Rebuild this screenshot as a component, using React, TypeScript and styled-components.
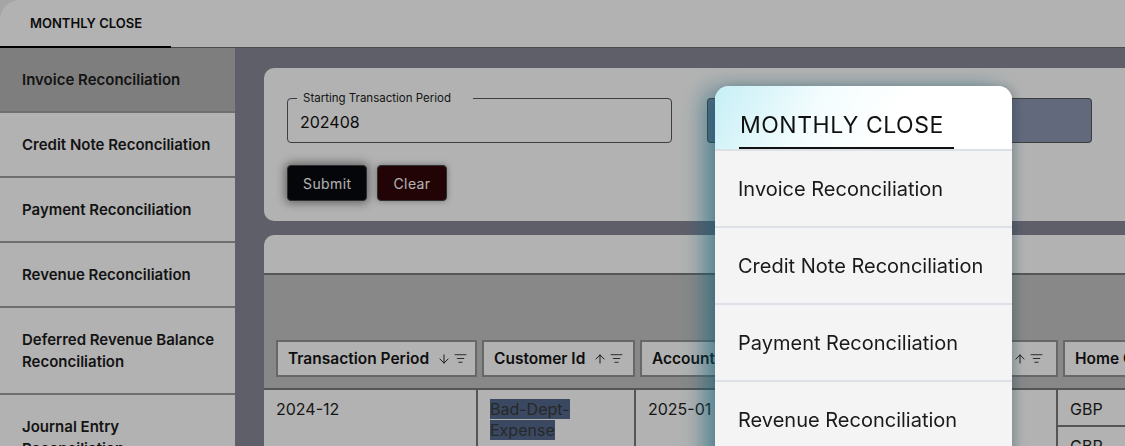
import React from 'react'
import styled, { createGlobalStyle } from 'styled-components'
import { ArrowDown, ArrowUp, ListFilter } from 'lucide-react'

const GlobalStyle = createGlobalStyle`
  html, body {
    margin: 0;
    height: 100%;
    overflow: hidden;
    background: #ececec;
  }
  body {
    font-family: Inter, "Noto Sans", Arial, sans-serif;
    color: #222;
  }
`

const sideItems = [
  'Invoice Reconciliation',
  'Credit Note Reconciliation',
  'Payment Reconciliation',
  'Revenue Reconciliation',
  'Deferred Revenue Balance Reconciliation',
  'Journal Entry Reconciliation',
]

const menuItems = [
  'Invoice Reconciliation',
  'Credit Note Reconciliation',
  'Payment Reconciliation',
  'Revenue Reconciliation',
]

type HeadCol = { label: string; sort?: 'asc' | 'desc'; width: string }

const headCols: HeadCol[] = [
  { label: 'Transaction Period', sort: 'desc', width: '201px' },
  { label: 'Customer Id', sort: 'asc', width: '153px' },
  { label: 'Account Code', sort: 'asc', width: '418px' },
  { label: 'Home Currency', width: '160px' },
]

export default function App() {
  return (
    <>
      <GlobalStyle />
      <Page>
        <TopBar>
          <Tab $active>MONTHLY CLOSE</Tab>
        </TopBar>
        <Body>
          <Sidebar>
            {sideItems.map((item, i) => (
              <SideItem key={item} $active={i === 0}>
                {item}
              </SideItem>
            ))}
          </Sidebar>
          <Main>
            <FilterCard>
              <Fields>
                <Fieldset>
                  <Legend>Starting Transaction Period</Legend>
                  <Value>202408</Value>
                </Fieldset>
                <Fieldset $filled />
              </Fields>
              <Buttons>
                <Button $tone="dark">Submit</Button>
                <Button $tone="danger">Clear</Button>
              </Buttons>
            </FilterCard>
            <TableCard>
              <Toolbar />
              <HeadBand>
                {headCols.map((col) => (
                  <HeadCell key={col.label} style={{ width: col.width }}>
                    <HeadLabel>{col.label}</HeadLabel>
                    {col.sort && (
                      <SortIcons>
                        {col.sort === 'asc' ? (
                          <ArrowUp size={14} strokeWidth={1.7} />
                        ) : (
                          <ArrowDown size={14} strokeWidth={1.7} />
                        )}
                        <ListFilter size={13} strokeWidth={1.6} />
                      </SortIcons>
                    )}
                  </HeadCell>
                ))}
              </HeadBand>
              <Row>
                <Cell $width="214px">2024-12</Cell>
                <Cell $width="158px">
                  <Wrap>
                    <Selected>Bad-Dept-Expense</Selected>
                  </Wrap>
                </Cell>
                <Cell $width="422px">2025-01</Cell>
                <Stack>
                  <SubCell>GBP</SubCell>
                  <SubCell>GBP</SubCell>
                </Stack>
              </Row>
            </TableCard>
          </Main>
        </Body>
      </Page>
      <Backdrop />
      <Menu>
        <MenuHead>
          <MenuTitle>MONTHLY CLOSE</MenuTitle>
        </MenuHead>
        {menuItems.map((item) => (
          <MenuItem key={item}>{item}</MenuItem>
        ))}
      </Menu>
    </>
  )
}

const Page = styled.div`
  height: 446px;
  background: #fff;
  border-top-left-radius: 20px;
  overflow: hidden;
  display: flex;
  flex-direction: column;
`
const TopBar = styled.div`
  height: 47px;
  flex-shrink: 0;
  display: flex;
  border-bottom: 1px solid #6a6a6a;
`
const Tab = styled.div<{ $active?: boolean }>`
  width: 171px;
  box-sizing: border-box;
  padding-left: 30px;
  display: flex;
  align-items: center;
  font-size: 13px;
  font-weight: 600;
  color: #111;
  border-bottom: 2px solid ${(p) => (p.$active ? '#000' : 'transparent')};
  margin-bottom: -1px;
`
const Body = styled.div`
  flex: 1;
  display: flex;
  min-height: 0;
`
const Sidebar = styled.div`
  width: 235px;
  flex-shrink: 0;
  background: #fff;
`
const SideItem = styled.div<{ $active?: boolean }>`
  padding: 21px 16px 20px 22px;
  line-height: 22px;
  font-size: 15px;
  font-weight: 600;
  color: #1c1c1c;
  background: ${(p) => (p.$active ? '#b5b5b5' : '#fff')};
  border-bottom: 2px solid #a0a0a0;
`
const Main = styled.div`
  flex: 1;
  background: #888897;
  padding: 20px 0 0 29px;
  display: flex;
  flex-direction: column;
  gap: 14px;
  min-width: 0;
`
const FilterCard = styled.div`
  background: #fff;
  border-radius: 10px 0 0 10px;
  padding: 30px 0 20px 23px;
`
const Fields = styled.div`
  display: grid;
  grid-template-columns: 385px 385px;
  gap: 35px;
`
const Fieldset = styled.fieldset<{ $filled?: boolean }>`
  margin: 0;
  height: 45px;
  box-sizing: border-box;
  border: 1px solid #5a5a5a;
  border-radius: 4px;
  padding: 0 12px;
  position: relative;
  background: ${(p) => (p.$filled ? '#8f97b3' : 'transparent')};
`
const Legend = styled.div`
  position: absolute;
  top: -8px;
  left: 9px;
  padding: 0 5px 0 6px;
  font-size: 11.5px;
  line-height: 15px;
  color: #222;
  background: #fff;
  width: 176px;
  box-sizing: border-box;
`
const Value = styled.div`
  padding-top: 13px;
  font-size: 16px;
  color: #111;
`
const Buttons = styled.div`
  display: flex;
  gap: 10px;
  margin-top: 22px;
`
const Button = styled.button<{ $tone: 'dark' | 'danger' }>`
  height: 36px;
  padding: 0 15px;
  border: 1px solid #444;
  border-radius: 4px;
  font-family: Inter, Arial, sans-serif;
  font-size: 14px;
  letter-spacing: 0.4px;
  color: #fff;
  background: ${(p) => (p.$tone === 'dark' ? '#07090e' : '#320709')};
  box-shadow: ${(p) =>
    p.$tone === 'dark'
      ? '0 0 10px 2px rgba(0, 0, 0, 0.45)'
      : '0 0 6px rgba(0, 0, 0, 0.35)'};
`
const TableCard = styled.div`
  flex: 1;
  background: #fff;
  border-top-left-radius: 10px;
  overflow: hidden;
`
const Toolbar = styled.div`
  height: 38px;
  border-bottom: 2px solid #7a7a7a;
`
const HeadBand = styled.div`
  height: 115px;
  box-sizing: border-box;
  background: #c3c3c3;
  display: flex;
  align-items: flex-end;
  gap: 5px;
  padding: 0 0 11px 12px;
  border-bottom: 2px solid #7a7a7a;
`
const HeadCell = styled.div`
  flex-shrink: 0;
  height: 37px;
  box-sizing: border-box;
  background: #fff;
  border: 2px solid #949494;
  display: flex;
  align-items: center;
  justify-content: space-between;
  padding: 0 13px 0 10px;
  white-space: nowrap;
  overflow: hidden;
`
const HeadLabel = styled.span`
  font-size: 15.5px;
  font-weight: 600;
  color: #151515;
`
const SortIcons = styled.span`
  display: flex;
  align-items: center;
  gap: 3px;
  margin-left: 8px;
  color: #222;
`
const Row = styled.div`
  display: flex;
`
const Cell = styled.div<{ $width: string }>`
  width: ${(p) => p.$width};
  flex-shrink: 0;
  box-sizing: border-box;
  padding: 9px 12px;
  font-size: 16px;
  line-height: 21px;
  color: #1e1e1e;
  border-right: 2px solid #7a7a7a;
  height: 80px;
`
const Wrap = styled.div`
  width: 92px;
`
const Selected = styled.span`
  background: #53688d;
  color: #3a3a3a;
`
const Stack = styled.div`
  flex: 1;
  display: flex;
  flex-direction: column;
`
const SubCell = styled.div`
  height: 37px;
  box-sizing: border-box;
  padding: 9px 12px;
  font-size: 16px;
  line-height: 21px;
  color: #1e1e1e;
  border-bottom: 2px solid #7a7a7a;
`
const Backdrop = styled.div`
  position: fixed;
  inset: 0;
  background: rgba(0, 0, 0, 0.3);
`
const Menu = styled.div`
  position: fixed;
  left: 715px;
  top: 86px;
  width: 297px;
  height: 420px;
  background: #f4f4f4;
  border-radius: 14px 14px 0 0;
  overflow: hidden;
  box-shadow: -10px 4px 24px rgba(10, 95, 120, 0.6), 4px 0 10px rgba(0, 0, 0, 0.15);
`
const MenuHead = styled.div`
  height: 65px;
  box-sizing: border-box;
  padding: 0 24px;
  background: linear-gradient(120deg, #c6eff6 0%, #f4fdfe 35%, #fff 60%);
  border-bottom: 2px solid #dbe1e6;
`
const MenuTitle = styled.div`
  display: inline-block;
  padding: 26px 10px 8px 1px;
  font-size: 23px;
  line-height: 27px;
  letter-spacing: 0.5px;
  color: #111;
  border-bottom: 2px solid #111;
`
const MenuItem = styled.div`
  height: 77px;
  box-sizing: border-box;
  padding-left: 23px;
  display: flex;
  align-items: center;
  font-size: 20px;
  color: #1a1a1a;
  border-bottom: 2px solid #dbe1e6;
`
